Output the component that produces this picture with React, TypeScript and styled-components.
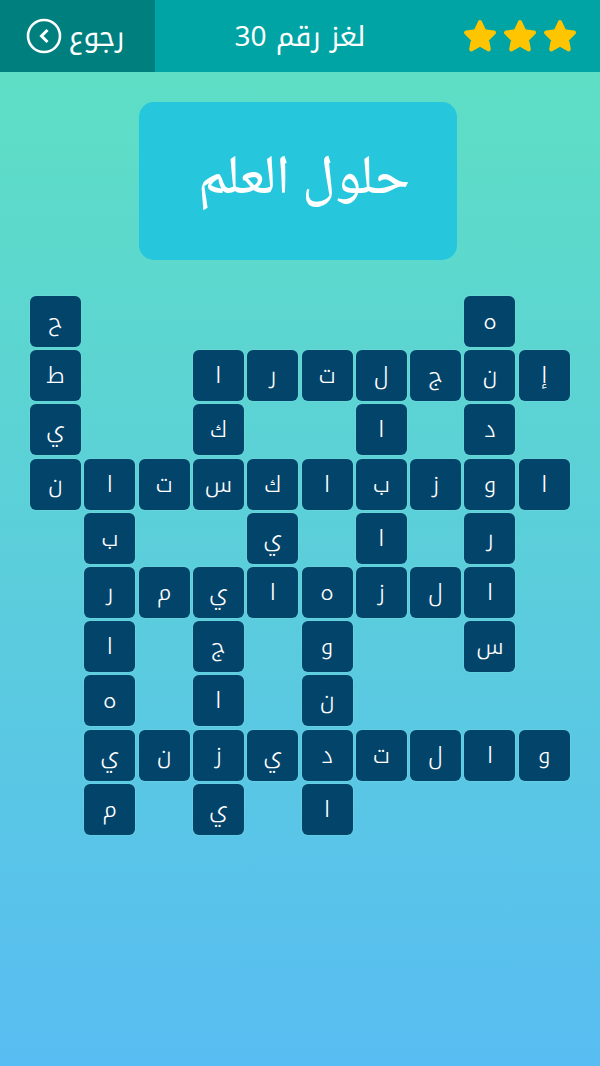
import React from "react";
import styled, { createGlobalStyle } from "styled-components";

const KUFI = `"Noto Kufi Arabic", "DejaVu Sans", sans-serif`;

const Global = createGlobalStyle`
  html, body { margin: 0; padding: 0; }
  body { font-family: ${KUFI}; }
`;

const Page = styled.div`
  width: 600px;
  height: 1066px;
  overflow: hidden;
  display: flex;
  flex-direction: column;
  background: linear-gradient(180deg, #5ee1c1 0%, #58bdf2 100%);
`;

const TopBar = styled.header`
  height: 72px;
  display: grid;
  grid-template-columns: 155px 1fr 155px;
  align-items: stretch;
  background: #00a4a4;
  color: #fff;
`;

const BackButton = styled.button`
  display: flex;
  align-items: center;
  justify-content: center;
  gap: 7px;
  padding: 0 5px 0 0;
  border: 0;
  background: #007f7f;
  color: #fff;
  font: 28px ${KUFI};
`;

const PuzzleTitle = styled.h1`
  margin: 0;
  align-self: center;
  text-align: center;
  font-weight: 400;
  font-size: 28px;
  direction: rtl;
`;

const Stars = styled.div`
  display: flex;
  align-items: center;
  justify-content: flex-end;
  gap: 4px;
  padding-right: 22px;
`;

const Clue = styled.div`
  align-self: center;
  margin: 30px 0 0 -4px;
  padding-left: 12px;
  box-sizing: border-box;
  width: 318px;
  height: 158px;
  display: flex;
  align-items: center;
  justify-content: center;
  border-radius: 15px;
  background: #26c6dd;
  color: #fff;
  font: 500 55px "Noto Naskh Arabic", "DejaVu Sans", serif;
  direction: rtl;
`;

const Board = styled.div`
  margin: 36px 30px 0 29.97px;
  display: grid;
  grid-template-columns: repeat(10, 51px);
  grid-auto-rows: 51px;
  column-gap: 3.3125px;
  row-gap: 3.2px;
`;

const Tile = styled.div<{ $row: number; $col: number }>`
  grid-row: ${(p) => p.$row + 1};
  grid-column: ${(p) => p.$col + 1};
  display: flex;
  align-items: center;
  justify-content: center;
  box-sizing: border-box;
  border-radius: 6px;
  background: #03446b;
  box-shadow: 0 0 0 1px rgba(120, 220, 220, 0.35);
  color: #fff;
  font-size: 23px;
  font-weight: 300;
  line-height: 1;
`;

const rows: [number, string][][] = [
  [[0, "ح"], [8, "ە"]],
  [[0, "ط"], [3, "ا"], [4, "ر"], [5, "ت"], [6, "ل"], [7, "ج"], [8, "ن"], [9, "إ"]],
  [[0, "ي"], [3, "ك"], [6, "ا"], [8, "د"]],
  [[0, "ن"], [1, "ا"], [2, "ت"], [3, "س"], [4, "ك"], [5, "ا"], [6, "ب"], [7, "ز"], [8, "و"], [9, "ا"]],
  [[1, "ب"], [4, "ي"], [6, "ا"], [8, "ر"]],
  [[1, "ر"], [2, "م"], [3, "ي"], [4, "ا"], [5, "ە"], [6, "ز"], [7, "ل"], [8, "ا"]],
  [[1, "ا"], [3, "ج"], [5, "و"], [8, "س"]],
  [[1, "ە"], [3, "ا"], [5, "ن"]],
  [[1, "ي"], [2, "ن"], [3, "ز"], [4, "ي"], [5, "د"], [6, "ت"], [7, "ل"], [8, "ا"], [9, "و"]],
  [[1, "م"], [3, "ي"], [5, "ا"]],
];

const Star = () => (
  <svg width="36" height="36" viewBox="0 0 36 36" aria-hidden="true">
    <polygon
      points="18,4 22.3,13.2 32,14.6 25,21.6 26.8,31.4 18,26.6 9.2,31.4 11,21.6 4,14.6 13.7,13.2"
      fill="#ffc500"
      stroke="#ffc500"
      strokeWidth="4"
      strokeLinejoin="round"
    />
  </svg>
);

const BackIcon = () => (
  <svg width="36" height="36" viewBox="0 0 36 36" fill="none" stroke="#fff" aria-hidden="true">
    <circle cx="18" cy="18" r="16" strokeWidth="2.6" />
    <path d="M21.5 12 L15.5 18 L21.5 24" strokeWidth="3" />
  </svg>
);

export default function App() {
  return (
    <Page>
      <Global />
      <TopBar>
        <BackButton>
          <BackIcon />
          <span>رجوع</span>
        </BackButton>
        <PuzzleTitle>لغز رقم 30</PuzzleTitle>
        <Stars>
          <Star />
          <Star />
          <Star />
        </Stars>
      </TopBar>
      <Clue>حلول العلم</Clue>
      <Board>
        {rows.map((cells, r) =>
          cells.map(([c, ch]) => (
            <Tile key={`${r}-${c}`} $row={r} $col={c}>
              {ch}
            </Tile>
          ))
        )}
      </Board>
    </Page>
  );
}
